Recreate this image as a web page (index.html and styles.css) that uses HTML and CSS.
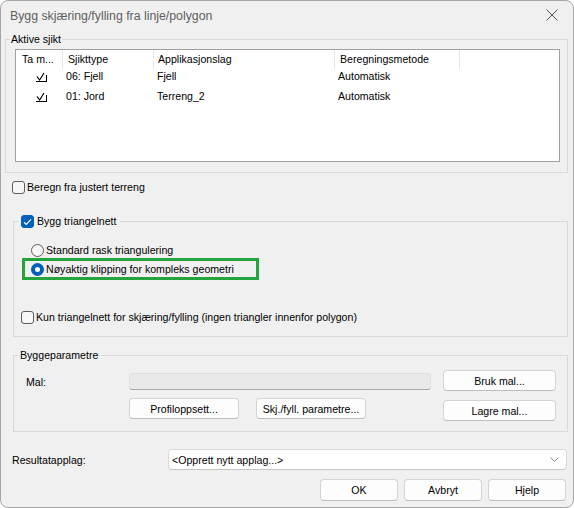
FILE: index.html
```html
<!DOCTYPE html>
<html lang="no">
<head>
<meta charset="utf-8">
<title>Bygg skjæring/fylling fra linje/polygon</title>
<link rel="stylesheet" href="styles.css">
</head>
<body>
<div class="window">
  <div class="titlebar">
    <span class="title">Bygg skjæring/fylling fra linje/polygon</span>
    <svg class="close" width="12" height="12" viewBox="0 0 12 12"><path d="M0.5 0.5 L11.5 11.5 M11.5 0.5 L0.5 11.5" stroke="#5a5a5a" stroke-width="1" fill="none"/></svg>
  </div>

  <fieldset class="group g1">
    <legend class="legend l1">Aktive sjikt</legend>
    <div class="g1-body">
      <div class="list">
        <div class="lrow head">
          <div class="c c1">Ta m...</div>
          <div class="c c2">Sjikttype</div>
          <div class="c c3">Applikasjonslag</div>
          <div class="c c4">Beregningsmetode</div>
          <div class="c c5"></div>
        </div>
        <div class="lrow item">
          <div class="c c1"><svg class="lcheck" width="13" height="12" viewBox="0 0 13 12"><path d="M2 5.5 L4.6 9 L9 2" stroke="#000" stroke-width="1.2" fill="none"/><path d="M1 10.5 H12 M11.5 4 V11" stroke="#000" stroke-width="1" fill="none"/></svg></div>
          <div class="c c2">06: Fjell</div>
          <div class="c c3">Fjell</div>
          <div class="c c4">Automatisk</div>
          <div class="c c5"></div>
        </div>
        <div class="lrow item">
          <div class="c c1"><svg class="lcheck" width="13" height="12" viewBox="0 0 13 12"><path d="M2 5.5 L4.6 9 L9 2" stroke="#000" stroke-width="1.2" fill="none"/><path d="M1 10.5 H12 M11.5 4 V11" stroke="#000" stroke-width="1" fill="none"/></svg></div>
          <div class="c c2">01: Jord</div>
          <div class="c c3">Terreng_2</div>
          <div class="c c4">Automatisk</div>
          <div class="c c5"></div>
        </div>
      </div>
    </div>
  </fieldset>

  <div class="chk-row row-beregn"><span class="cb"></span><span>Beregn fra justert terreng</span></div>

  <fieldset class="group g2">
    <legend class="legend l2"><span class="chk-row"><span class="cb on"><svg width="9" height="8" viewBox="0 0 9 8"><path d="M1 4.2 L3.3 6.4 L8 1.4" stroke="#fff" stroke-width="1.2" fill="none"/></svg></span><span>Bygg triangelnett</span></span></legend>
    <div class="g2-body">
      <div class="rad-row"><span class="rb"></span><span>Standard rask triangulering</span></div>
      <div class="rad-row hl"><span class="rb on"></span><span>Nøyaktig klipping for kompleks geometri</span></div>
      <div class="chk-row row-kun"><span class="cb"></span><span>Kun triangelnett for skjæring/fylling (ingen triangler innenfor polygon)</span></div>
    </div>
  </fieldset>

  <fieldset class="group g3">
    <legend class="legend l3">Byggeparametre</legend>
    <div class="g3-body">
      <div class="bp-left">
        <div class="mal-row"><span class="mal-label">Mal:</span><span class="mal-field"></span></div>
        <div class="bp-btns"><span class="btn w110">Profiloppsett...</span><span class="btn w110">Skj./fyll. parametre...</span></div>
      </div>
      <div class="bp-right">
        <span class="btn w113">Bruk mal...</span>
        <span class="btn w113">Lagre mal...</span>
      </div>
    </div>
  </fieldset>

  <div class="res-row">
    <span class="res-label">Resultatapplag:</span>
    <span class="combo"><span>&lt;Opprett nytt applag...&gt;</span><svg width="9" height="5" viewBox="0 0 9 5"><path d="M0.5 0.5 L4.5 4.5 L8.5 0.5" stroke="#8a8a8a" stroke-width="1" fill="none"/></svg></span>
  </div>

  <div class="footer">
    <span class="btn w78">OK</span>
    <span class="btn w78">Avbryt</span>
    <span class="btn w78">Hjelp</span>
  </div>
</div>
</body>
</html>
```

FILE: styles.css
```css
* { box-sizing: border-box; }
html, body { margin: 0; padding: 0; background: #ffffff; }
body {
  font-family: "Liberation Sans", Arial, sans-serif;
  font-size: 10.6px;
  color: #000;
}
.window {
  width: 574px;
  height: 508px;
  border: 1px solid #a6a6a6;
  border-radius: 8px;
  background: #f0f0f0;
  overflow: hidden;
}
.titlebar {
  height: 32px;
  display: flex;
  justify-content: space-between;
  align-items: flex-start;
  padding: 7px 15px 0 9px;
}
.title {
  font-size: 12.3px;
  line-height: 16px;
  color: #5f5f5f;
}
.close { margin-top: 1px; }

.group {
  margin: 0;
  padding: 0;
  border: 1px solid #d9d9d9;
  min-width: 0;
}
.legend {
  padding: 0;
  height: 13px;
  line-height: 13px;
}

/* Aktive sjikt */
.g1 { margin: 0 5px 0 4px; }
.l1 { margin-left: 4px; padding: 0 1px; }
.g1-body { padding: 3px 7px 10px 9px; }
.list {
  height: 113px;
  background: #fff;
  border: 1px solid #a0a0a0;
}
.lrow { display: flex; }
.head { height: 19px; line-height: 19px; }
.item { height: 20px; line-height: 14px; }
.c { white-space: nowrap; overflow: hidden; }
.c1 { width: 47px; }
.c2 { width: 91px; }
.c3 { width: 181px; }
.c4 { width: 125px; }
.c5 { flex: 1; }
.head .c { border-right: 1px solid #e5e5e5; }
.head .c5 { border-right: 0; }
.head .c1 { padding-left: 6px; }
.head .c2 { padding-left: 5px; }
.head .c3 { padding-left: 4px; }
.head .c4 { padding-left: 5px; }
.item .c2, .item .c3, .item .c4 { padding-left: 3px; }
.item .c1 { padding-left: 19px; padding-top: 2px; }
.lcheck { display: block; }

/* checkboxes / radios */
.chk-row {
  display: flex;
  align-items: center;
  gap: 2px;
  height: 13px;
  line-height: 13px;
}
.cb {
  width: 13px;
  height: 13px;
  flex: none;
  border: 1px solid #5d5d5d;
  border-radius: 3px;
  background: #f7f7f7;
}
.cb.on {
  background: #005fb8;
  border-color: #005fb8;
  display: flex;
  align-items: center;
  justify-content: center;
}
.cb.on svg { display: block; }
.rb {
  width: 13px;
  height: 13px;
  flex: none;
  border: 1px solid #5d5d5d;
  border-radius: 50%;
  background: #f7f7f7;
}
.rb.on {
  border: 4px solid #005fb8;
  background: #fff;
}
.row-beregn { margin: 8px 0 0 11px; }

/* Bygg triangelnett */
.g2 { margin: 21px 5px 0 12px; }
.l2 { margin-left: 5px; padding: 0 3px 0 2px; }
.l2 .chk-row { gap: 3px; }
.g2-body { padding: 15px 0 12px 17px; }
.rad-row {
  display: flex;
  align-items: center;
  gap: 2px;
  height: 14px;
  line-height: 14px;
}
.hl {
  margin: 1px 0 0 -9px;
  width: 237px;
  height: 22px;
  border: 3px solid #23a43d;
  padding-left: 6px;
}
.row-kun { margin: 31px 0 0 -10px; }

/* Byggeparametre */
.g3 { margin: 12px 5px 0 12px; }
.l3 { margin-left: 4px; padding: 0 2px; }
.g3-body {
  display: flex;
  padding: 8px 0 10px 12px;
}
.bp-left { width: 405px; }
.mal-row {
  display: flex;
  align-items: center;
  margin-top: 3px;
  height: 17px;
}
.mal-label { width: 103px; }
.mal-field {
  width: 302px;
  height: 17px;
  background: #e9e9e9;
  border: 1px solid #e0e0e0;
  border-bottom-color: #a8a8a8;
  border-radius: 3px;
}
.bp-btns {
  display: flex;
  gap: 17px;
  margin: 8px 0 0 103px;
}
.bp-right {
  display: flex;
  flex-direction: column;
  gap: 9px;
  margin-left: 12px;
}

.btn {
  display: flex;
  align-items: center;
  justify-content: center;
  height: 21px;
  background: #fdfdfd;
  border: 1px solid #d3d3d3;
  border-bottom-color: #bdbdbd;
  border-radius: 4px;
  white-space: nowrap;
}
.w110 { width: 110px; }
.w113 { width: 113px; }
.w78 { width: 78px; height: 22px; }

/* Resultatapplag */
.res-row {
  display: flex;
  align-items: center;
  margin: 17px 0 0 11px;
  height: 21px;
}
.res-label { width: 156px; }
.combo {
  width: 399px;
  height: 21px;
  display: flex;
  align-items: center;
  justify-content: space-between;
  padding: 0 7px 0 3px;
  background: #fff;
  border: 1px solid #d9d9d9;
  border-bottom-color: #c4c4c4;
  border-radius: 4px;
}
.combo svg { display: block; }

.footer {
  display: flex;
  justify-content: flex-end;
  gap: 6px;
  margin-top: 9px;
  padding-right: 7px;
}
```
